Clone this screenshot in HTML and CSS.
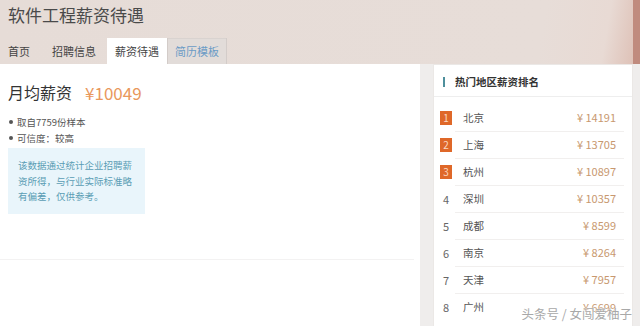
FILE: index.html
```html
<!DOCTYPE HTML>
<html>
<head>
<meta charset="utf-8">
<title>软件工程薪资待遇</title>
<link rel="stylesheet" href="styles.css">
</head>

<body>
<div class="head">
	<h1 class="title">软件工程薪资待遇</h1>
	<ul class="tabs">
		<li class="tab first">首页</li>
		<li class="tab">招聘信息</li>
		<li class="tab on">薪资待遇</li>
		<li class="tab gray">简历模板</li>
	</ul>
</div>

<div class="main">
	<div class="left">
		<div class="top">
			<div class="avg">
				<span class="avg-label">月均薪资</span>
				<span class="avg-num">¥10049</span>
			</div>
			<ul class="facts">
				<li>取自7759份样本</li>
				<li>可信度：较高</li>
			</ul>
			<div class="note">该数据通过统计企业招聘薪资所得，与行业实际标准略有偏差，仅供参考。</div>
		</div>
		<div class="bottom"></div>
	</div>

	<div class="side">
		<div class="card">
			<div class="card-hd"><i class="bar"></i>热门地区薪资排名</div>
			<ol class="rank">
				<li><span class="no hot">1</span><div class="body"><span class="city">北京</span><span class="price">¥ 14191</span></div></li>
				<li><span class="no hot">2</span><div class="body"><span class="city">上海</span><span class="price">¥ 13705</span></div></li>
				<li><span class="no hot">3</span><div class="body"><span class="city">杭州</span><span class="price">¥ 10897</span></div></li>
				<li><span class="no">4</span><div class="body"><span class="city">深圳</span><span class="price">¥ 10357</span></div></li>
				<li><span class="no">5</span><div class="body"><span class="city">成都</span><span class="price">¥ 8599</span></div></li>
				<li><span class="no">6</span><div class="body"><span class="city">南京</span><span class="price">¥ 8264</span></div></li>
				<li><span class="no">7</span><div class="body"><span class="city">天津</span><span class="price">¥ 7957</span></div></li>
				<li><span class="no">8</span><div class="body"><span class="city">广州</span><span class="price">¥ 6699</span></div></li>
			</ol>
		</div>
	</div>
</div>

<div class="mark">头条号 / 女闯爱柚子</div>
</body>
</html>
```

FILE: styles.css
```css
* {margin:0; padding:0;}
li {list-style:none;}
html, body {height:100%; overflow:hidden;}
body {background:#efedec; font-family:"Noto Sans CJK SC", "Noto Sans", sans-serif; color:#444;}

/* 顶部 */
.head {height:64px; background:linear-gradient(to right, rgba(0,0,0,0) 633px, #c08b7e 633px), linear-gradient(100deg, #e6dcd7 0%, #e7ddd8 84%, #e8dad4 94%, #dcbcb1 100%);}
.title {font-size:17px; font-weight:normal; line-height:20px; padding:5px 0 0 8px; color:#4a4a4a;}
.tabs {display:flex; margin-top:13px; height:26px;}
.tab {padding:0 8px; margin-right:3px; font-size:11px; line-height:26px; color:#444;}
.tab.first {margin-right:6px;}
.tab.on {background:#fff; margin-right:0;}
.tab.gray {background:#e2dcd9; color:#6b9bc6; box-shadow:inset 1px 0 0 #d3ccc9, inset -1px 0 0 #d3ccc9, inset 0 1px 0 #d9d3d0;}

/* 主体 */
.main {display:flex; height:262px;}
.left {width:420px; background:#fff; display:flex; flex-direction:column;}
.top {height:195px; padding:18px 0 0 8px; box-sizing:border-box;}
.bottom {flex:1; border-top:1px solid #f3f2f2; margin-right:6px;}

.avg {display:flex; align-items:center; height:20px;}
.avg-label {font-size:16px; color:#333;}
.avg-num {font-size:17px; color:#e9985c; margin-left:13px;}

.facts {margin-top:12px; font-size:9.5px; color:#555;}
.facts li {line-height:16px; padding-left:9px; position:relative;}
.facts li:before {content:""; position:absolute; left:1px; top:6px; width:4px; height:4px; border-radius:50%; background:#555;}

.note {width:117px; margin-top:2px; padding:10px 10px 9px; background:#e9f5fb; color:#5a9db4; font-size:9.5px; line-height:15.5px;}

/* 右侧排行 */
.side {padding:0 7px 0 13px;}
.card {width:198px; height:262px; background:#fff; border:1px solid #ebe8e6; border-bottom:0;}
.card-hd {height:31px; border-bottom:1px solid #eeeeee; display:flex; align-items:center; padding:2px 0 0 9px; box-sizing:border-box; height:32px; font-size:10.5px; font-weight:bold; color:#333;}
.bar {width:2px; height:10px; background:#4e8f9c; margin-right:10px;}
.rank {padding-top:7px;}
.rank li {display:flex; align-items:center; height:27px; padding-left:6px;}
.no {width:12px; text-align:center; font-size:11px; color:#666; margin-right:3px;}
.no.hot {height:14px; line-height:14px; background:#df6829; color:#fbd9c2; font-size:10px;}
.body {flex:1; height:27px; display:flex; align-items:center; justify-content:space-between; margin-right:8px; padding:0 8px; border-bottom:1px solid #f1efee;}
.rank li:last-child .body {border-bottom:0;}
.city {font-size:10.5px; color:#555;}
.price {font-size:11px; color:#c8986f;}

/* 水印 */
.mark {position:absolute; right:8px; bottom:3px; font-size:12.5px; color:#a8a8a8; text-shadow:0 0 2px #fff, 0 0 1px #fff;}
```
